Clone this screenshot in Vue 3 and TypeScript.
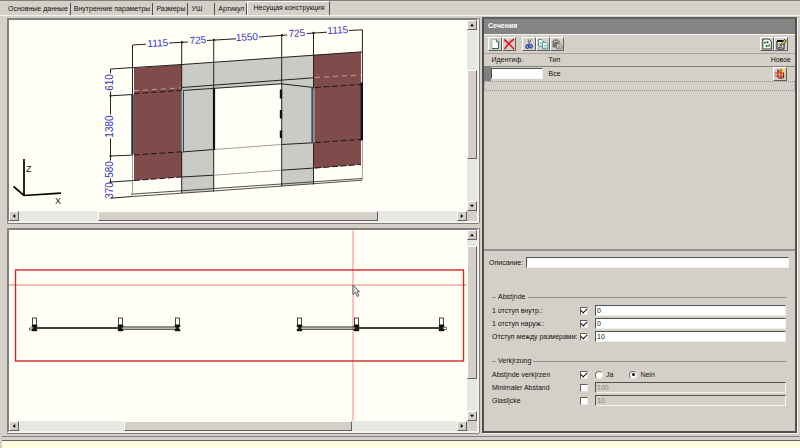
<script setup lang="ts">
import { ref } from 'vue'

interface Option {
  id: string
  label: string
  checked: boolean
  value: string
  disabled: boolean
}

const tabs = ['Основные данные', 'Внутренние параметры', 'Размеры', 'УШ', 'Артикул', 'Несущая конструкция']
const active = ref(5)

const identifier = ref('')
const description = ref('')
const shorten = ref(true)
const shortenMode = ref('nein')

const distances = ref<Option[]>([
  { id: 'inner', label: '1 отступ внутр.:', checked: true, value: '0', disabled: false },
  { id: 'outer', label: '1 отступ наруж.:', checked: true, value: '0', disabled: false },
  { id: 'between', label: 'Отступ между размерами:', checked: true, value: '10', disabled: false },
])
const limits = ref<Option[]>([
  { id: 'minimum', label: 'Minimaler Abstand', checked: false, value: '100', disabled: true },
  { id: 'gap', label: 'Glasl|cke', checked: false, value: '10', disabled: true },
])

const topDims = [
  { x: 158, y: 46, text: '1115' },
  { x: 198, y: 43, text: '725' },
  { x: 247, y: 40, text: '1550' },
  { x: 297, y: 36, text: '725' },
  { x: 338, y: 33, text: '1115' },
]
const sideDims = [
  { y: 82, text: '610' },
  { y: 126, text: '1380' },
  { y: 169, text: '580' },
  { y: 190, text: '370' },
]
const posts = [34, 120, 177, 299, 356, 441]
</script>

<template>
  <div class="app">
    <nav class="tabs">
      <button
        v-for="(tab, i) in tabs"
        :key="tab"
        type="button"
        class="tab"
        :class="{ active: i === active, short: tab.length < 3 }"
        @click="active = i"
      >{{ tab }}</button>
    </nav>

    <main class="workspace">
      <div class="views">
        <section class="view">
          <svg class="canvas" viewBox="9 20 458 190" preserveAspectRatio="xMidYMid meet">
            <g fill="#cbcbc5">
              <path d="M182 64 L313.5 54.5 V87 L282 83.5 L182 90 Z" />
              <path d="M182 90 L214 88 V190.5 L182 192.5 Z" />
              <path d="M282 83 L313.5 87 V183.5 L282 185.5 Z" />
            </g>
            <g fill="#7f4b4b">
              <path d="M134 67.5 L182 64 V176.5 L134 180 Z" />
              <path d="M313.5 54.5 L361 51.5 V164 L313.5 168 Z" />
            </g>
            <g fill="none" stroke="#222" stroke-width="1">
              <path d="M132.5 44.5 L146 43.7 M169 42.5 L188 41.5 M207 40 L236 38.3 M259 36.5 L287 34.5 M307 33 L327 31.7 M349 30 L362.5 29.3" />
              <path d="M132.5 44.5 V95 M181.7 41.7 V192.5 M213.7 39.7 V191 M281.7 34.7 V186 M313.5 32.5 V184 M362.4 29.3 V84" />
              <path d="M110.5 68.5 V73 M110.5 91 V114 M110.5 138 V160 M110.5 178 V181 M110.5 68.5 L182 64 L362 51.3" />
              <path d="M110.5 95.3 L133 94 M110.5 155.5 L133 154.6 M110.5 181.5 L134 180 M110.5 197.7 L132 196" />
              <path d="M181.7 87 L313.5 77.3 M181.7 90 L281.7 83.3 L313.5 87" />
              <path d="M181.7 151.5 L213.7 149 M281.7 144 L313 142.3 M181.7 176.5 L213.7 174.7 M281.7 169.7 L313 167.6" />
              <path d="M132 196 L213.7 190.5 L362 179.7 M131 193.7 L362 178" stroke-width=".8" />
            </g>
            <g fill="none" stroke="#777" stroke-width=".7">
              <path d="M213.7 149 L281.7 144 M213.7 174.7 L281.7 169.7 M132.5 154 V195 M362.4 139 V180" />
            </g>
            <g fill="none" stroke="#241313" stroke-dasharray="6 2.5">
              <path d="M134 93 L181 90 M134 154.5 L181 151.3 M134 180 L181 176.5 M315 87 L361 84 M315 142 L361 139 M315 167.5 L361 164" />
            </g>
            <path d="M134 90.3 L181 87.3 M315 77 L361 74.5" fill="none" stroke="#c9b3ae" stroke-width=".8" stroke-dasharray="5 4" />
            <g fill="none">
              <path d="M132.5 94 V154" stroke="#26303a" stroke-width="2.5" />
              <path d="M182.5 89.5 V151" stroke="#33464a" stroke-width="3" />
              <path d="M182.2 89.5 V151" stroke="#c4e4e4" stroke-width="1.2" />
              <path d="M214 88 V149.5" stroke="#111" stroke-width="2.2" />
              <path d="M312.8 87 V142" stroke="#48525c" stroke-width="3" />
              <path d="M314 88 V142" stroke="#d5dce0" stroke-width=".8" />
              <path d="M361.8 82 V140" stroke="#111" stroke-width="2.4" />
              <path d="M281 89 V98 M281 109.5 V118 M281 130 V137.5" stroke="#111" stroke-width="2.4" />
            </g>
            <g fill="#222">
              <circle v-for="x in [182, 214, 282, 313.5]" :key="x" :cx="x" :cy="41.7 - (x - 182) * 0.07" r="1.2" />
              <circle v-for="y in [95.3, 155.5, 181.5]" :key="y" cx="110.5" :cy="y" r="1.1" />
            </g>
            <text
              v-for="d in topDims"
              :key="d.x"
              class="dim"
              :x="d.x"
              :y="d.y"
              :transform="`rotate(-3 ${d.x} ${d.y})`"
            >{{ d.text }}</text>
            <text
              v-for="d in sideDims"
              :key="d.y"
              class="dim"
              x="113"
              :y="d.y"
              :transform="`rotate(-90 113 ${d.y})`"
            >{{ d.text }}</text>
            <path d="M24 158.5 V195 M13.5 186 L24 195 L61 192.7" fill="none" stroke="#000" stroke-width="1.7" />
            <text class="axis" x="26" y="171">Z</text>
            <text class="axis" x="55" y="203">X</text>
          </svg>
          <div class="vbar">
            <button type="button" class="arrow" aria-label="up"><svg viewBox="0 0 5 5"><path d="M0 4 L2.5 1 L5 4 Z" /></svg></button>
            <div class="track"><span class="thumb v-top"></span></div>
            <button type="button" class="arrow" aria-label="down"><svg viewBox="0 0 5 5"><path d="M0 1 L2.5 4 L5 1 Z" /></svg></button>
          </div>
          <div class="hbar">
            <button type="button" class="arrow" aria-label="left"><svg viewBox="0 0 5 5"><path d="M4 0 L1 2.5 L4 5 Z" /></svg></button>
            <div class="track"><span class="thumb h-top"></span></div>
            <button type="button" class="arrow" aria-label="right"><svg viewBox="0 0 5 5"><path d="M1 0 L4 2.5 L1 5 Z" /></svg></button>
          </div>
        </section>

        <section class="view">
          <svg class="canvas" viewBox="9 230 458 190" preserveAspectRatio="xMidYMid meet">
            <path d="M353 230 V420" stroke="#f6a49c" stroke-width="1.3" />
            <path d="M9 284.5 H467" stroke="#e08078" stroke-width="1" />
            <rect x="15.5" y="269.5" width="448" height="91" fill="none" stroke="#cf2a2a" stroke-width="1.4" />
            <g fill="none" stroke="#000">
              <path d="M34 327.5 H120 M356 327.5 H441" stroke-width="1.3" />
              <path d="M120 326.5 H177 M120 328.7 H177 M299 326.5 H356 M299 328.7 H356" stroke-width=".9" />
              <path d="M29.5 327.5 H33 V329.5 H29.5 Z M443 326.7 H446.5 V329 H443 Z" stroke="#444" stroke-width=".8" />
            </g>
            <g v-for="x in posts" :key="x">
              <rect :x="x - 1.5" y="317.5" width="4" height="7" fill="#fffff5" stroke="#333" stroke-width=".9" />
              <path :d="`M${x - 2} 324.5 h5 v2 h-1.3 v2 h1.3 v2 h-5 v-2 h1.3 v-2 h-1.3 Z`" fill="#111" stroke="#111" stroke-width=".4" />
            </g>
            <path d="M353 284.5 V294 L355.2 292 L357.2 296 L358.9 295.2 L357 291.3 H359.6 Z" fill="#d9dadd" stroke="#444" stroke-width=".8" />
          </svg>
          <div class="vbar">
            <button type="button" class="arrow" aria-label="up"><svg viewBox="0 0 5 5"><path d="M0 4 L2.5 1 L5 4 Z" /></svg></button>
            <div class="track"><span class="thumb v-bottom"></span></div>
            <button type="button" class="arrow" aria-label="down"><svg viewBox="0 0 5 5"><path d="M0 1 L2.5 4 L5 1 Z" /></svg></button>
          </div>
          <div class="hbar">
            <button type="button" class="arrow" aria-label="left"><svg viewBox="0 0 5 5"><path d="M4 0 L1 2.5 L4 5 Z" /></svg></button>
            <div class="track"><span class="thumb h-bottom"></span></div>
            <button type="button" class="arrow" aria-label="right"><svg viewBox="0 0 5 5"><path d="M1 0 L4 2.5 L1 5 Z" /></svg></button>
          </div>
        </section>
      </div>

      <aside class="side">
        <h2 class="title">Сечения</h2>
        <div class="toolbar">
          <button type="button" class="tool" aria-label="new">
            <svg viewBox="0 0 12 12"><path d="M3 1.5 H7.5 L9.5 3.5 V10.5 H3 Z" fill="#fff" stroke="#8aa" stroke-width=".7" /><path d="M7.3 1.5 V3.8 H9.5 V10.5 H3" fill="none" stroke="#2b5a5c" stroke-width=".9" /></svg>
          </button>
          <button type="button" class="tool" aria-label="delete">
            <svg viewBox="0 0 12 12"><path d="M1.5 2 Q5 4.5 10.5 10.5 M10.5 1.5 Q5.5 5 2 10.5" fill="none" stroke="#d81e1e" stroke-width="1.7" stroke-linecap="round" /></svg>
          </button>
          <span class="gap"></span>
          <button type="button" class="tool" aria-label="cut">
            <svg viewBox="0 0 12 12"><path d="M5 1.5 L7.2 7 M8 1.5 L5.2 7" fill="none" stroke="#57657d" stroke-width="1" /><g fill="none" stroke="#2546a8" stroke-width="1.3"><ellipse cx="4.3" cy="8.7" rx="1.3" ry="1.7" /><ellipse cx="7.9" cy="8.3" rx="1.3" ry="1.7" /></g></svg>
          </button>
          <button type="button" class="tool" aria-label="copy">
            <svg viewBox="0 0 12 12"><g fill="#f4ffff" stroke="#2d7f88" stroke-width=".8"><path d="M1.5 1.5 H4.7 L6.5 3.3 V8 H1.5 Z" /><path d="M5.5 4.5 H9 L10.7 6.2 V10.7 H5.5 Z" /></g><path d="M2.7 4 H5 M2.7 5.6 H5 M6.7 7.4 H9.5 M6.7 9 H9.5" stroke="#58a0a8" stroke-width=".7" /></svg>
          </button>
          <button type="button" class="tool" aria-label="paste" disabled>
            <svg viewBox="0 0 12 12"><path d="M1.5 2.5 H3.5 V1.3 H6.5 V2.5 H8.5 V9.5 H1.5 Z" fill="#77756f" /><path d="M3 3.5 H7" stroke="#d4d0c8" stroke-width=".8" /><path d="M5.5 5.8 H9 L10.8 7.5 V10.8 H5.5 Z" fill="#d4d0c8" stroke="#77756f" stroke-width=".9" /><path d="M7 8 H9 M7 9.3 H9.5" stroke="#77756f" stroke-width=".7" /></svg>
          </button>
          <span class="spring"></span>
          <button type="button" class="tool" aria-label="refresh">
            <svg viewBox="0 0 12 12"><path d="M1.8 1 H8 L10.3 3.2 V11 H1.8 Z" fill="#fff" stroke="#222" stroke-width=".9" /><path d="M3.7 6 V4.2 H6.3 M8.3 6 V8 H5.8" fill="none" stroke="#157a36" stroke-width="1.1" /><path d="M6 2.7 L8 4.2 L6 5.7 Z M6 6.5 L4 8 L6 9.5 Z" fill="#157a36" /></svg>
          </button>
          <button type="button" class="tool" aria-label="properties">
            <svg viewBox="0 0 12 12"><path d="M2 3 H9 V11 H2 Z" fill="#fff" stroke="#111" stroke-width="1" /><path d="M2 2 H8 V4 H2 Z" fill="#111" /><path d="M3.3 6 H5 M3.3 8 H7.5 M3.3 9.5 H7.5" stroke="#333" stroke-width=".8" /><path d="M5 7 L9.5 1.5 L11.3 3 L7 7.3 Z" fill="#e9dd4a" stroke="#111" stroke-width=".8" /></svg>
          </button>
        </div>

        <div class="list">
          <table>
            <thead>
              <tr><th class="c-id">Идентиф.</th><th>Тип</th><th class="c-new">Новое</th></tr>
            </thead>
            <tbody>
              <tr>
                <td class="c-mark"><input v-model="identifier" class="field" type="text" aria-label="Идентиф." /></td>
                <td>Все</td>
                <td class="c-new">
                  <button type="button" class="tool" aria-label="Новое">
                    <svg viewBox="0 0 12 12"><path d="M6 1 H10.5 V6 H6 Z" fill="#f0dc3c" /><path d="M4 1.5 V10 M7 1 V11 M1 5 H10 M1 8 H10.5" fill="none" stroke="#c8201c" stroke-width="1.1" /><path d="M3 3 H6 M4 10 H9.5 V5" fill="none" stroke="#6c2018" stroke-width=".9" /></svg>
                  </button>
                </td>
              </tr>
            </tbody>
          </table>
          <div class="empty-row"></div>
        </div>

        <div class="describe">
          <label for="description">Описание:</label>
          <input id="description" v-model="description" class="field" type="text" />
        </div>

        <div class="groups">
          <fieldset>
            <legend>Abst|nde</legend>
            <div v-for="o in distances" :key="o.id" class="row">
              <label :for="o.id">{{ o.label }}</label>
              <input v-model="o.checked" class="check" type="checkbox" :aria-label="o.label" />
              <input :id="o.id" v-model="o.value" class="field" type="text" :disabled="o.disabled" />
            </div>
          </fieldset>

          <fieldset>
            <legend>Verk|rzung</legend>
            <div class="row">
              <label for="shorten">Abst|nde verk|rzen</label>
              <input id="shorten" v-model="shorten" class="check" type="checkbox" />
              <div class="radios">
                <label><input v-model="shortenMode" type="radio" name="mode" value="ja" />Ja</label>
                <label><input v-model="shortenMode" type="radio" name="mode" value="nein" />Nein</label>
              </div>
            </div>
            <div v-for="o in limits" :key="o.id" class="row">
              <label :for="o.id">{{ o.label }}</label>
              <input v-model="o.checked" class="check" type="checkbox" :aria-label="o.label" />
              <input :id="o.id" v-model="o.value" class="field" type="text" :disabled="o.disabled" />
            </div>
          </fieldset>
        </div>
      </aside>
    </main>

    <footer class="status"></footer>
  </div>
</template>

<style>
body {
  background: #d4d0c8;
}
</style>

<style scoped>
.app {
  box-sizing: border-box;
  min-height: 100vh;
  display: flex;
  flex-direction: column;
  background: #d4d0c8;
  border-top: 1px solid #808080;
  color: #111;
  font-family: "Liberation Sans", Arial, sans-serif;
  font-size: 7px;
  line-height: 10px;
}
.app * {
  box-sizing: border-box;
}
button,
input {
  margin: 0;
  padding: 0;
  font: inherit;
  color: inherit;
}
.tabs {
  display: flex;
  align-items: flex-end;
  height: 14px;
  padding-left: 5px;
}
.tab {
  height: 12px;
  padding: 0 2px 0 3px;
  border: 0;
  border-right: 1px solid #505050;
  background: none;
  white-space: nowrap;
}
.tab.short {
  padding-right: 12px;
}
.tab.active {
  height: 14px;
  padding: 0 4px 2px 5px;
  border-top: 1px solid #fff;
  border-left: 1px solid #fff;
}
.workspace {
  flex: 1;
  display: grid;
  grid-template-columns: minmax(0, 472fr) minmax(0, 315fr);
  column-gap: 3px;
  padding: 1px 3px 3px 7px;
  border-top: 1px solid #f4f2ee;
}
.views {
  display: grid;
  grid-template-rows: 1fr 1fr;
  row-gap: 5px;
  padding-top: 1px;
}
.view {
  display: grid;
  grid-template-columns: minmax(0, 1fr) 10px;
  grid-template-rows: minmax(0, 1fr) 10px;
  border: 2px solid;
  border-color: #808080 #f4f2ee #f4f2ee #808080;
  box-shadow: 0 1px #808080, 1px 0 #808080;
  background: #d4d0c8;
}
.canvas {
  display: block;
  width: 100%;
  height: 100%;
  min-height: 0;
  background: #fffff5;
}
.dim {
  fill: #3434c4;
  font-family: "Liberation Sans", Arial, sans-serif;
  font-size: 10px;
  text-anchor: middle;
}
.axis {
  fill: #222;
  font-family: "Liberation Sans", Arial, sans-serif;
  font-size: 9px;
}
.vbar,
.hbar {
  display: flex;
  background: #e9e7e3;
}
.vbar {
  flex-direction: column;
}
.arrow {
  flex: none;
  display: grid;
  place-items: center;
  width: 10px;
  height: 10px;
  border: 1px solid;
  border-color: #fff #606060 #606060 #fff;
  background: #d4d0c8;
}
.arrow svg {
  width: 4px;
  height: 4px;
}
.track {
  flex: 1;
  display: flex;
}
.vbar .track {
  flex-direction: column;
}
.thumb {
  border: 1px solid;
  border-color: #fff #606060 #606060 #fff;
  background: #d4d0c8;
}
.v-top {
  height: 52%;
  margin-top: 40px;
}
.h-top {
  width: 64%;
  margin-left: 79px;
}
.v-bottom {
  height: 78%;
  margin-top: 6px;
}
.h-bottom {
  width: 52%;
  margin-left: 105px;
}
.side {
  display: flex;
  flex-direction: column;
  border: 2px solid;
  border-color: #606060 #505050 #505050 #505050;
  box-shadow: 1px 1px #f4f2ee;
}
.title {
  margin: 0;
  height: 15px;
  padding-left: 4px;
  background: #848484;
  color: #fff;
  font-size: 7px;
  font-weight: bold;
  line-height: 14px;
}
.toolbar {
  display: flex;
  align-items: center;
  height: 20px;
  padding: 0 7px 1px 4px;
  border-top: 1px solid #f4f2ee;
  border-bottom: 1px solid #a8a49c;
}
.tool {
  display: grid;
  place-items: center;
  width: 14px;
  height: 14px;
  border: 1px solid;
  border-color: #fff #606060 #606060 #fff;
  background: #d4d0c8;
}
.tool svg {
  width: 12px;
  height: 12px;
}
.gap {
  width: 6px;
}
.spring {
  flex: 1;
}
.list {
  height: 197px;
  border-bottom: 2px solid #909090;
}
table {
  width: 100%;
  border-collapse: collapse;
  table-layout: fixed;
}
th,
td {
  padding: 0;
  font-weight: normal;
  text-align: left;
}
thead tr {
  height: 12px;
  border-bottom: 1px solid #808080;
}
tbody tr {
  height: 15px;
}
.c-id {
  width: 61px;
  padding-left: 4px;
}
.c-mark {
  border-left: 7px solid #808080;
}
.c-mark .field {
  display: block;
  width: 52px;
}
.c-new {
  width: 40px;
  padding-right: 4px;
  text-align: right;
}
td.c-new .tool {
  margin: 0 4px 0 auto;
}
.empty-row {
  height: 10px;
  border: 1px dotted #909090;
}
.field {
  min-width: 0;
  height: 11px;
  padding: 0 1px;
  border: 1px solid;
  border-color: #505050 #f4f2ee #f4f2ee #505050;
  border-radius: 0;
  background: #fff;
  outline: none;
}
.field:disabled {
  background: #d4d0c8;
  color: #85817a;
}
.describe {
  display: flex;
  align-items: center;
  gap: 3px;
  padding: 6px 6px 0 5px;
}
.describe .field {
  flex: 1;
}
.groups {
  flex: 1;
  display: flex;
  flex-direction: column;
  gap: 14px;
  padding: 24px 9px 12px 8px;
}
fieldset {
  display: grid;
  gap: 2px;
  min-width: 0;
  margin: 0;
  padding: 3px 0 0;
  border: 0;
  border-top: 1px solid #909090;
}
legend {
  margin-left: 4px;
  padding: 0 2px;
}
.row {
  display: grid;
  grid-template-columns: 88px 15px minmax(0, 1fr);
  align-items: center;
  height: 11px;
}
.row > label {
  white-space: nowrap;
}
.check {
  appearance: none;
  display: grid;
  place-items: center;
  width: 8px;
  height: 8px;
  border: 1px solid;
  border-color: #606060 #e8e6e2 #e8e6e2 #606060;
  background: #fff;
}
.check:checked::before {
  content: "";
  width: 5px;
  height: 3px;
  margin-bottom: 2px;
  border: solid #111;
  border-width: 0 0 1px 1px;
  rotate: -45deg;
}
.radios {
  display: flex;
  gap: 16px;
}
.radios label {
  display: flex;
  align-items: center;
  gap: 3px;
}
.radios input {
  appearance: none;
  display: grid;
  place-items: center;
  width: 8px;
  height: 8px;
  border: 1px solid;
  border-color: #707070 #e8e6e2 #e8e6e2 #707070;
  border-radius: 50%;
  background: #fff;
}
.radios input:checked::before {
  content: "";
  width: 3px;
  height: 3px;
  border-radius: 50%;
  background: #111;
}
.status {
  flex: none;
  height: 12px;
  margin-left: 2px;
  border-top: 1px solid #808080;
  padding-top: 3px;
  background: #ffffe1 content-box;
  box-shadow: inset 0 3px #d4d0c8, inset 0 4px #606060;
}
</style>
